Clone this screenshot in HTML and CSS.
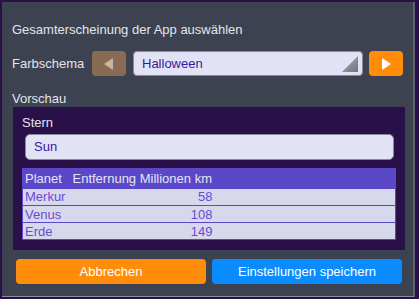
FILE: index.html
```html
<!DOCTYPE html>
<html lang="de">
<head>
    <meta charset="UTF-8">
    <title>Gesamterscheinung</title>
    <link rel="stylesheet" href="styles.css">
</head>
<body>
    <div class="dialog">
        <div class="title">Gesamterscheinung der App auswählen</div>

        <div class="scheme-row">
            <span class="label">Farbschema</span>
            <button class="arrow-btn prev">
                <svg width="10" height="12" viewBox="0 0 10 12"><polygon points="9,0 9,12 0,6" fill="#c8b6a4"/></svg>
            </button>
            <div class="combo">
                <span>Halloween</span>
                <svg class="grip" width="16" height="16" viewBox="0 0 16 16">
                    <defs>
                        <linearGradient id="g" x1="0" y1="0" x2="1" y2="1">
                            <stop offset="0" stop-color="#b0b0b8"/>
                            <stop offset="1" stop-color="#707078"/>
                        </linearGradient>
                    </defs>
                    <polygon points="16,0 16,16 0,16" fill="url(#g)"/>
                </svg>
            </div>
            <button class="arrow-btn next">
                <svg width="10" height="12" viewBox="0 0 10 12"><polygon points="1,0 1,12 10,6" fill="#ffffff"/></svg>
            </button>
        </div>

        <div class="section-label">Vorschau</div>
        <div class="preview">
            <div class="field-label">Stern</div>
            <div class="field">Sun</div>
            <table class="planets">
                <thead>
                    <tr><th>Planet</th><th>Entfernung Millionen km</th><th class="fill"></th></tr>
                </thead>
                <tbody>
                    <tr><td>Merkur</td><td class="num">58</td><td></td></tr>
                    <tr><td>Venus</td><td class="num">108</td><td></td></tr>
                    <tr><td>Erde</td><td class="num">149</td><td></td></tr>
                </tbody>
            </table>
        </div>

        <div class="actions">
            <button class="button cancel">Abbrechen</button>
            <button class="button save">Einstellungen speichern</button>
        </div>
    </div>
</body>
</html>
```

FILE: styles.css
```css
* {
    margin: 0;
    padding: 0;
    box-sizing: border-box;
}

body {
    font-family: "Liberation Sans", Arial, sans-serif;
    font-size: 13px;
    background: #2a1048;
    width: 419px;
    height: 299px;
    overflow: hidden;
}

.dialog {
    margin: 2px 0 0 2px;
    width: 413px;
    height: 295px;
    background: #3d4250;
    border-right: 2px solid #5e626d;
    border-bottom: 1px solid #8a8d96;
    padding: 20px 10px 0 10px;
    color: #e4e4ec;
}

.title {
    line-height: 16px;
}

.scheme-row {
    display: flex;
    align-items: center;
    margin-top: 13px;
    height: 25px;
}

.label {
    width: 80px;
}

.arrow-btn {
    width: 34px;
    height: 25px;
    border: none;
    border-radius: 4px;
    display: flex;
    align-items: center;
    justify-content: center;
}

.arrow-btn.prev {
    background: #8a6a52;
}

.arrow-btn.next {
    background: #ff8c0a;
    margin-left: 6px;
}

.combo {
    position: relative;
    width: 230px;
    height: 25px;
    margin-left: 7px;
    background: #e2e2f6;
    border: 1px solid #8a8a98;
    border-radius: 4px;
    color: #3a189a;
    padding-left: 8px;
    line-height: 23px;
}

.combo .grip {
    position: absolute;
    right: 4px;
    bottom: 3px;
}

.section-label {
    margin-top: 15px;
    line-height: 16px;
}

.preview {
    margin: 0 -2px 0 1px;
    height: 143px;
    background: #2a1048;
    padding: 8px 9px 0 9px;
}

.field-label {
    line-height: 16px;
}

.field {
    margin: 3px 2px 0 3px;
    height: 26px;
    background: #e2e2f6;
    border: 1px solid #8a8a98;
    border-radius: 5px;
    color: #3a189a;
    padding-left: 8px;
    line-height: 24px;
}

.planets {
    margin-top: 8px;
    width: 100%;
    border-collapse: collapse;
    border: 1px solid #5a48c8;
}

.planets th {
    background: #5a48c8;
    color: #e4e4f4;
    font-weight: normal;
    text-align: left;
    height: 20px;
    padding: 0 0 0 2px;
}

.planets td {
    background: #d8d8ec;
    color: #6a4ad4;
    height: 17px;
    padding: 0 0 0 2px;
    border-bottom: 1px solid #5a48c8;
}

.planets th:first-child,
.planets td:first-child {
    width: 48px;
}

.planets td.num {
    text-align: right;
    width: 142px;
}

.actions {
    display: flex;
    gap: 6px;
    margin-top: 9px;
    padding-left: 4px;
}

.button {
    width: 190px;
    height: 25px;
    border: none;
    border-radius: 4px;
    color: #ffffff;
    font-family: "Liberation Sans", Arial, sans-serif;
    font-size: 13px;
}

.button.cancel {
    background: #ff8c0a;
}

.button.save {
    background: #0a8cff;
}
```
